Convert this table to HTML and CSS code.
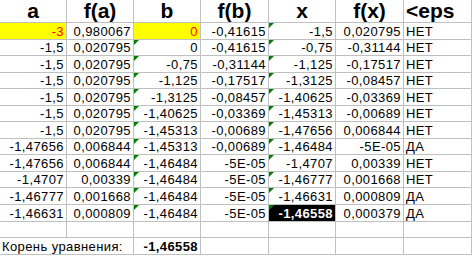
FILE: index.html
```html
<!DOCTYPE html>
<html>
<head>
<meta charset="utf-8">
<link rel="stylesheet" href="styles.css">
</head>
<body>
<div class="sheet">
  <div class="c h">a</div><div class="c h">f(a)</div><div class="c h">b</div><div class="c h">f(b)</div><div class="c h">x</div><div class="c h">f(x)</div><div class="c h l">&lt;eps</div>

  <div class="c y red">-3</div><div class="c">0,980067</div><div class="c y red">0</div><div class="c">-0,41615</div><div class="c t">-1,5</div><div class="c">0,020795</div><div class="c l">НЕТ</div>

  <div class="c">-1,5</div><div class="c">0,020795</div><div class="c t">0</div><div class="c">-0,41615</div><div class="c t">-0,75</div><div class="c">-0,31144</div><div class="c l">НЕТ</div>

  <div class="c">-1,5</div><div class="c">0,020795</div><div class="c t">-0,75</div><div class="c">-0,31144</div><div class="c t">-1,125</div><div class="c">-0,17517</div><div class="c l">НЕТ</div>

  <div class="c">-1,5</div><div class="c">0,020795</div><div class="c t">-1,125</div><div class="c">-0,17517</div><div class="c t">-1,3125</div><div class="c">-0,08457</div><div class="c l">НЕТ</div>

  <div class="c">-1,5</div><div class="c">0,020795</div><div class="c t">-1,3125</div><div class="c">-0,08457</div><div class="c t">-1,40625</div><div class="c">-0,03369</div><div class="c l">НЕТ</div>

  <div class="c">-1,5</div><div class="c">0,020795</div><div class="c t">-1,40625</div><div class="c">-0,03369</div><div class="c t">-1,45313</div><div class="c">-0,00689</div><div class="c l">НЕТ</div>

  <div class="c">-1,5</div><div class="c">0,020795</div><div class="c t">-1,45313</div><div class="c">-0,00689</div><div class="c t">-1,47656</div><div class="c">0,006844</div><div class="c l">НЕТ</div>

  <div class="c">-1,47656</div><div class="c">0,006844</div><div class="c t">-1,45313</div><div class="c">-0,00689</div><div class="c t">-1,46484</div><div class="c">-5E-05</div><div class="c l">ДА</div>

  <div class="c">-1,47656</div><div class="c">0,006844</div><div class="c t">-1,46484</div><div class="c">-5E-05</div><div class="c t">-1,4707</div><div class="c">0,00339</div><div class="c l">НЕТ</div>

  <div class="c">-1,4707</div><div class="c">0,00339</div><div class="c t">-1,46484</div><div class="c">-5E-05</div><div class="c t">-1,46777</div><div class="c">0,001668</div><div class="c l">НЕТ</div>

  <div class="c">-1,46777</div><div class="c">0,001668</div><div class="c t">-1,46484</div><div class="c">-5E-05</div><div class="c t">-1,46631</div><div class="c">0,000809</div><div class="c l">ДА</div>

  <div class="c">-1,46631</div><div class="c">0,000809</div><div class="c t">-1,46484</div><div class="c">-5E-05</div><div class="c t sel">-1,46558</div><div class="c">0,000379</div><div class="c l">ДА</div>

  <div class="c"></div><div class="c"></div><div class="c"></div><div class="c"></div><div class="c"></div><div class="c"></div><div class="c"></div>

  <div class="c l span2">Корень уравнения:</div><div class="c b">-1,46558</div><div class="c"></div><div class="c"></div><div class="c"></div><div class="c"></div>
</div>
</body>
</html>
```
FILE: styles.css
```css
html, body {
  margin: 0;
  padding: 0;
  background: #fff;
}
.sheet {
  width: 472px;
  display: grid;
  grid-template-columns: 67px 67px 67px 68px 67px 68px 68px;
  grid-template-rows: 23px repeat(14, 16.56px);
  font-family: "Liberation Sans", Arial, sans-serif;
  font-size: 13px;
  letter-spacing: 0.4px;
  color: #000;
}
.c {
  position: relative;
  box-sizing: border-box;
  border-right: 1px solid #c0c0c0;
  border-bottom: 1px solid #c0c0c0;
  display: flex;
  align-items: flex-end;
  justify-content: flex-end;
  padding: 0 2px 0 2px;
  line-height: 15px;
  white-space: nowrap;
  overflow: visible;
}
.h {
  justify-content: center;
  font-weight: bold;
  font-size: 21px;
  letter-spacing: 0;
  line-height: 22px;
  padding: 0;
}
.l {
  justify-content: flex-start;
  padding-left: 2px;
}
.h.l {
  padding-left: 2px;
}
.y {
  background: #ffff00;
}
.red {
  color: #ff0000;
}
.b {
  font-weight: bold;
}
.sel {
  background: #000;
  color: #fff;
  font-weight: bold;
}
.span2 {
  grid-column: span 2;
}
.t::before {
  content: "";
  position: absolute;
  left: 0;
  top: 0;
  width: 0;
  height: 0;
  border-top: 5px solid #008000;
  border-right: 5px solid transparent;
}
```
